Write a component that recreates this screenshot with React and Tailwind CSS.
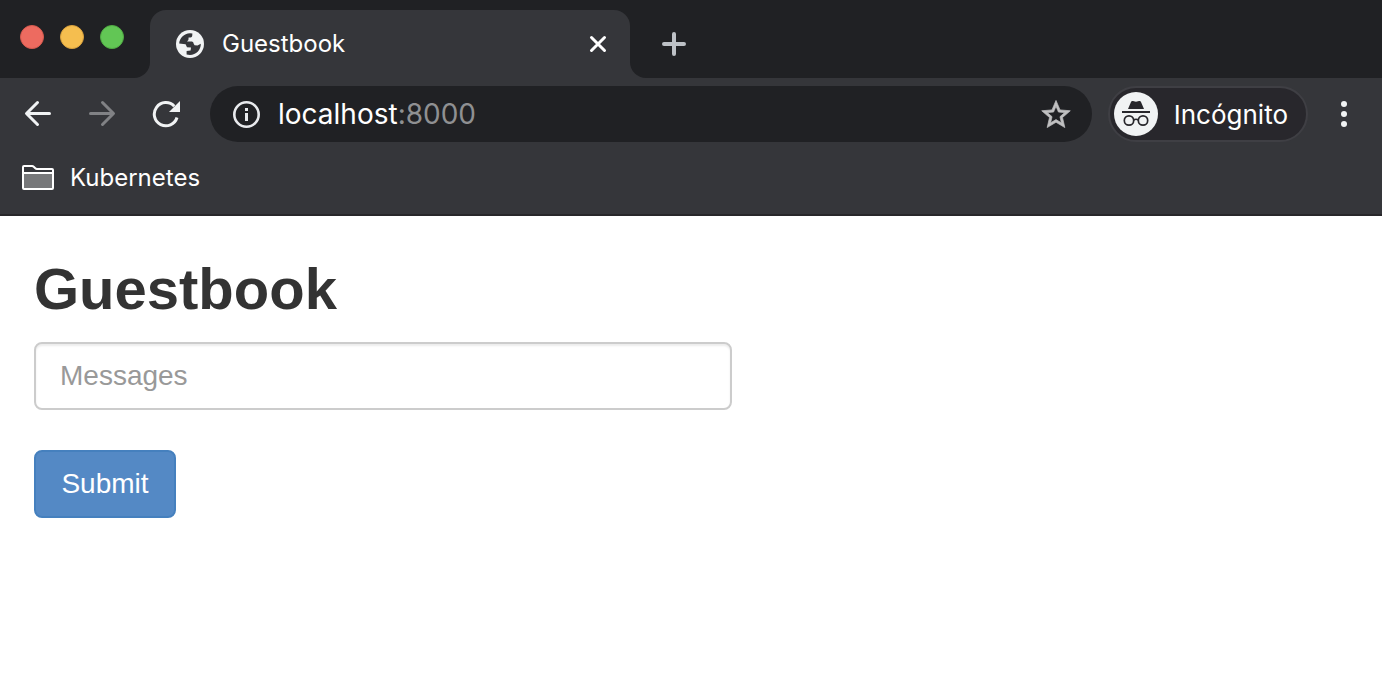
import React from "react";

function GlobeIcon() {
  return (
    <svg viewBox="0 0 28 28" className="size-7 shrink-0" aria-hidden="true">
      <circle cx="14" cy="14" r="14" fill="#f1f3f4" />
      <path
        d="M3.200 13.600C3.500 8 8 3.400 14 3.200L16.400 3.400 16.200 6Q16 7.400 14.600 7.400L12.600 7.600 12.400 10 11 11.400 16 11.600Q17.500 11.800 17.800 14L18.600 15.200 21.500 15.400 24.800 13.800C25 20 20 25 14 25L10.600 24.400 10.600 21 14.600 20.600 15 17.600 11 17.200 9.600 14.200z"
        fill="#35363a"
      />
    </svg>
  );
}

function FolderIcon() {
  return (
    <svg viewBox="0 0 32 26" className="h-[26px] w-8 shrink-0" aria-hidden="true">
      <path d="M2 8h28v15H2z" fill="#77787a" />
      <path d="M1 8V2q0-1 1-1h8q1 0 2 1l1 1q1 1 2 1h15q1 0 1 1v18q0 1-1 1H2q-1 0-1-1V8h30" fill="none" stroke="#fff" strokeWidth="2" />
    </svg>
  );
}

function IncognitoIcon() {
  return (
    <svg viewBox="0 0 44 44" className="size-11 shrink-0" aria-hidden="true">
      <circle cx="22" cy="22" r="22" fill="#f1f3f4" />
      <path d="M14 17l3-7q.5-1.500 2-1l3 .8 3-.8q1.500-.5 2 1l3 7z" fill="#28272c" />
      <path d="M8 19h28v2H8z" fill="#28272c" />
      <g fill="none" stroke="#28272c" strokeWidth="1.700">
        <circle cx="15" cy="28.500" r="4.700" />
        <circle cx="29" cy="28.500" r="4.700" />
        <path d="M19.700 28q2.300-1.500 4.600 0" />
      </g>
    </svg>
  );
}

function TabStrip() {
  return (
    <div className="flex h-[78px] bg-[#202124]">
      <div className="flex gap-4 pt-[25px] pl-5">
        <button aria-label="Close window" className="size-6 rounded-full border border-[#d65a4e] bg-[#ed6b60]" />
        <button aria-label="Minimize window" className="size-6 rounded-full border border-[#d9a13d] bg-[#f5be4f]" />
        <button aria-label="Zoom window" className="size-6 rounded-full border border-[#50ab43] bg-[#62c655]" />
      </div>
      <div className="mt-auto ml-[10px] size-4 bg-[#35363a]">
        <div className="size-4 rounded-br-2xl bg-[#202124]" />
      </div>
      <div className="mt-[10px] flex w-[480px] items-center rounded-t-2xl bg-[#35363a] pr-[22px] pl-[26px]">
        <GlobeIcon />
        <span className="ml-[18px] flex-1 text-2xl text-white">Guestbook</span>
        <button aria-label="Close tab" className="text-white">
          <svg viewBox="0 0 20 20" className="size-5" fill="none" stroke="currentColor" strokeWidth="3" strokeLinecap="round">
            <path d="M3.500 3.500l13 13M16.500 3.500l-13 13" />
          </svg>
        </button>
      </div>
      <div className="mt-auto size-4 bg-[#35363a]">
        <div className="size-4 rounded-bl-2xl bg-[#202124]" />
      </div>
      <button aria-label="New tab" className="mt-[10px] ml-4 text-[#bdc1c6]">
        <svg viewBox="0 0 24 24" className="size-6" fill="none" stroke="currentColor" strokeWidth="4" strokeLinecap="round">
          <path d="M2 12h20M12 2v20" />
        </svg>
      </button>
    </div>
  );
}

function Toolbar() {
  return (
    <div className="flex h-[72px] items-center bg-[#35363a] pr-8 pl-6">
      <button aria-label="Back" className="text-[#f1f3f4]">
        <svg viewBox="0 0 28 28" className="size-7" fill="none" stroke="currentColor" strokeWidth="3" strokeLinecap="round" strokeLinejoin="round">
          <path d="M25.500 13.500H3M13.500 2.500L2.500 13.500 13.500 24.500" />
        </svg>
      </button>
      <button aria-label="Forward" className="ml-9 text-[#818285]" disabled>
        <svg viewBox="0 0 28 28" className="size-7" fill="none" stroke="currentColor" strokeWidth="3" strokeLinecap="round" strokeLinejoin="round">
          <path d="M2.500 13.500H25M14.500 2.500L25.500 13.500 14.500 24.500" />
        </svg>
      </button>
      <button aria-label="Reload" className="ml-9 text-[#f1f3f4]">
        <svg viewBox="0 0 28 28" className="size-7" fill="none">
          <path d="M25 17.500A11.600 11.600 0 1 1 22.300 6.200" stroke="currentColor" strokeWidth="3" />
          <path d="M28 1v11H17z" fill="currentColor" />
        </svg>
      </button>
      <div className="ml-[30px] flex h-14 min-w-0 flex-1 items-center rounded-full bg-[#202124] pr-[21px] pl-[22px]">
        <svg viewBox="0 0 28 28" className="size-7 shrink-0" aria-hidden="true">
          <circle cx="14.500" cy="14.500" r="12.200" fill="none" stroke="#e8eaed" strokeWidth="2.600" />
          <path d="M13 8h3v3h-3zM13 13h3v8h-3z" fill="#e8eaed" />
        </svg>
        <span className="ml-[18px] flex-1 text-[28px] text-white">
          localhost<span className="text-[#8f9092]">:8000</span>
        </span>
        <button aria-label="Bookmark this page" className="text-[#c0c0c1]">
          <svg viewBox="1.500 1.500 21 20" className="size-[30px]" fill="currentColor" stroke="currentColor" strokeWidth=".500">
            <path d="M22 9.240l-7.190-.62L12 2 9.190 8.630 2 9.240l5.460 4.730L5.820 21 12 17.270 18.180 21l-1.630-7.030L22 9.240zM12 15.400l-3.760 2.270 1-4.280-3.320-2.880 4.380-.38L12 6.100l1.710 4.040 4.380.38-3.320 2.880 1 4.280L12 15.400z" />
          </svg>
        </button>
      </div>
      <button className="ml-4 flex h-14 items-center rounded-full border-2 border-[#3f3f44] bg-[#28272c] pr-[18px] pl-1 text-[26px] text-white">
        <IncognitoIcon />
        <span className="ml-4">Incógnito</span>
      </button>
      <button aria-label="Menu" className="ml-[30px] text-[#f1f3f4]">
        <svg viewBox="0 0 12 28" className="h-7 w-3" fill="currentColor">
          <circle cx="6" cy="4" r="3" />
          <circle cx="6" cy="14" r="3" />
          <circle cx="6" cy="24" r="3" />
        </svg>
      </button>
    </div>
  );
}

export default function App() {
  return (
    <div className="min-h-screen bg-white">
      <header className="font-[Inter,sans-serif]">
        <TabStrip />
        <Toolbar />
        <nav className="flex h-[66px] items-start border-b-2 border-[#28272a] bg-[#35363a] px-[22px] pt-3">
          <a href="#kubernetes" className="flex items-center gap-4 text-2xl text-white">
            <FolderIcon />
            Kubernetes
          </a>
        </nav>
      </header>
      <main className="px-[34px] pt-10 font-['Liberation_Sans',sans-serif]">
        <h1 className="text-[58px] leading-[66px] font-bold text-[#333333]">Guestbook</h1>
        <form className="mt-5 flex flex-col items-start gap-10" onSubmit={(e) => e.preventDefault()}>
          <input
            aria-label="Messages"
            placeholder="Messages"
            className="h-[68px] w-[698px] max-w-full rounded-lg border-2 border-[#cccccc] px-6 text-[28px] text-[#555555] shadow-[inset_0_2px_2px_rgba(0,0,0,0.075)] placeholder:text-[#999999]"
          />
          <button type="submit" className="h-[68px] min-w-[142px] rounded-lg border-2 border-[#4580be] bg-[#5489c5] px-6 text-[28px] text-white">
            Submit
          </button>
        </form>
      </main>
    </div>
  );
}
